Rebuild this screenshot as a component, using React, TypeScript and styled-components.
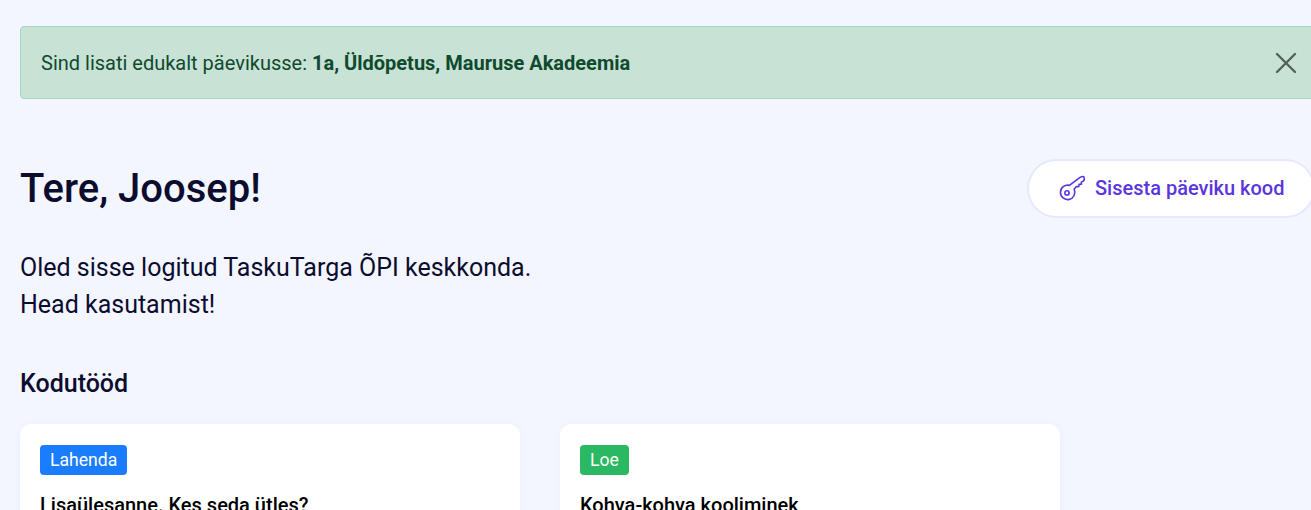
import React from "react";
import styled, { createGlobalStyle } from "styled-components";

const GlobalStyle = createGlobalStyle`
    html, body {
        margin: 0;
        padding: 0;
        height: 510px;
        overflow: hidden;
        background: #f3f6ff;
    }
    body {
        font-family: Roboto, "Liberation Sans", sans-serif;
    }
`;

const Page = styled.main`
    width: 1295px;
    height: 484px;
    padding: 26px 0 0 20px;
    overflow: hidden;
    color: #0c0c2e;
`;

const Alert = styled.div`
    box-sizing: border-box;
    display: flex;
    align-items: center;
    justify-content: space-between;
    height: 73px;
    padding: 0 17px 0 20px;
    background: #c8e2d6;
    border: 1px solid #a6d5c0;
    border-radius: 4px;
    color: #0f4a2d;
    font-size: 20px;

    b {
        font-weight: 700;
    }
`;

const CloseIcon = styled.svg`
    width: 22px;
    height: 22px;
    color: #55605b;
    display: block;
`;

const Header = styled.header`
    display: flex;
    align-items: center;
    justify-content: space-between;
    margin-top: 60px;
`;

const Title = styled.h1`
    margin: 0;
    font-size: 40px;
    line-height: 58px;
    font-weight: 500;
`;

const KeyButton = styled.button`
    box-sizing: border-box;
    display: flex;
    align-items: center;
    gap: 8px;
    height: 59px;
    width: 288px;
    padding: 0 0 2px 30px;
    background: #fff;
    border: 2px solid #e6e8fd;
    border-radius: 30px;
    color: #5a35dd;
    font-family: inherit;
    font-size: 20px;
    font-weight: 500;
`;

const Intro = styled.p`
    margin: 31px 0 0;
    font-size: 25px;
    line-height: 37px;
`;

const SectionTitle = styled.h2`
    margin: 43px 0 0;
    font-size: 25px;
    line-height: 35px;
    font-weight: 500;
`;

const Cards = styled.div`
    display: flex;
    gap: 40px;
    margin-top: 23px;
`;

const Card = styled.article`
    box-sizing: border-box;
    width: 500px;
    height: 200px;
    padding: 21px 20px;
    background: #fff;
    border-radius: 12px;
    box-shadow: 0 2px 8px rgba(90, 100, 220, 0.05);
`;

const Tag = styled.span<{ $color: string }>`
    display: inline-block;
    height: 30px;
    padding: 0 10px;
    background: ${(p) => p.$color};
    border-radius: 4px;
    color: #fff;
    font-size: 17.6px;
    line-height: 30px;
`;

const CardTitle = styled.h3`
    margin: 17px 0 0;
    color: #000;
    font-size: 20px;
    line-height: 26px;
    font-weight: 500;
`;

const KeyIcon = () => (
    <svg width="28" height="28" viewBox="0 0 28 28" fill="none" stroke="currentColor" strokeWidth="1.6" strokeLinejoin="round" strokeLinecap="round">
        <path d="M10.4 11.4 L20.7 3.6 Q23.7 1.9 24.9 2.8 Q25.6 4.6 25 6.6 L22.3 8.2 L22.5 10.2 L20.1 10.4 L19.7 12.6 L17.3 12.6 L15.1 15.2 A7.2 7.2 0 1 1 10.4 11.4 Z" />
        <circle cx="8" cy="18.9" r="2.1" />
    </svg>
);

export default function App() {
    return (
        <Page>
            <GlobalStyle />
            <Alert>
                <span>
                    Sind lisati edukalt päevikusse: <b>1a, Üldõpetus, Mauruse Akadeemia</b>
                </span>
                <CloseIcon viewBox="0 0 22 22" fill="none" stroke="currentColor" strokeWidth="2.4" strokeLinecap="round">
                    <path d="M2 2 L20 20 M20 2 L2 20" />
                </CloseIcon>
            </Alert>
            <Header>
                <Title>Tere, Joosep!</Title>
                <KeyButton>
                    <KeyIcon />
                    Sisesta päeviku kood
                </KeyButton>
            </Header>
            <Intro>
                Oled sisse logitud TaskuTarga ÕPI keskkonda.
                <br />
                Head kasutamist!
            </Intro>
            <SectionTitle>Kodutööd</SectionTitle>
            <Cards>
                <Card>
                    <Tag $color="#1a7dff">Lahenda</Tag>
                    <CardTitle>Lisaülesanne. Kes seda ütles?</CardTitle>
                </Card>
                <Card>
                    <Tag $color="#2ab863">Loe</Tag>
                    <CardTitle>Kohva-kohva kooliminek</CardTitle>
                </Card>
            </Cards>
        </Page>
    );
}
